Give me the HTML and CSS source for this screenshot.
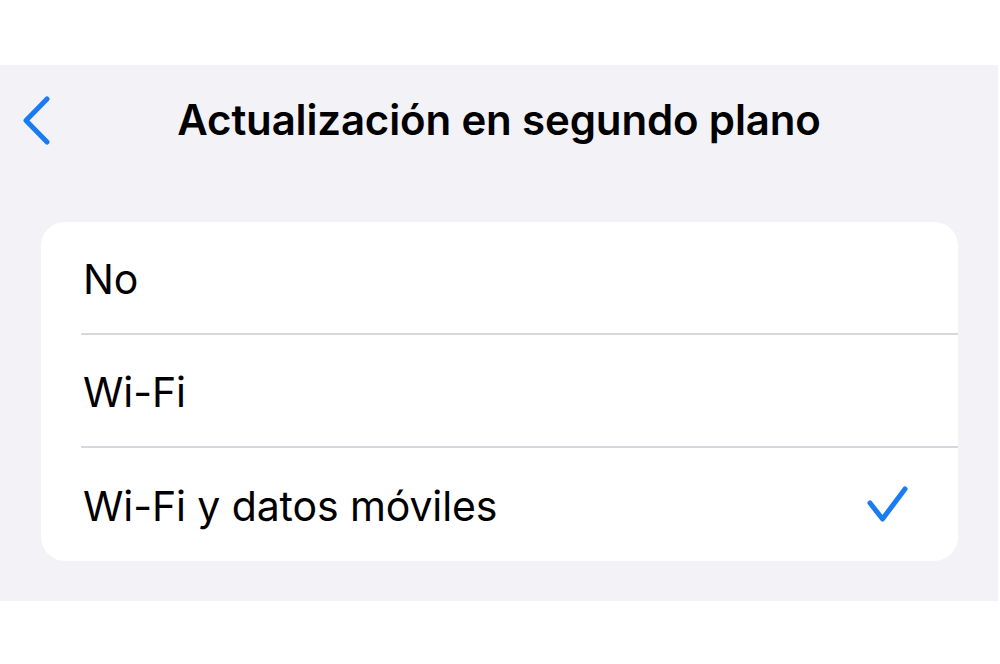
FILE: index.html
```html
<!DOCTYPE html>
<html lang="es">
<head>
<meta charset="utf-8">
<title>Actualización en segundo plano</title>
<link rel="stylesheet" href="styles.css">
</head>
<body>
<div class="screen">
  <header class="nav">
    <div class="nav-left">
      <svg class="back" width="30" height="50" viewBox="0 0 30 50">
        <path d="M25 3 L4 24.5 L25 46" fill="none" stroke="#1a7cf2" stroke-width="5" stroke-linecap="round" stroke-linejoin="round"/>
      </svg>
    </div>
    <h1 class="title">Actualización en segundo plano</h1>
    <div class="nav-right"></div>
  </header>
  <ul class="card">
    <li class="row"><div class="row-inner"><span class="label">No</span></div></li>
    <li class="row"><div class="row-inner"><span class="label">Wi-Fi</span></div></li>
    <li class="row"><div class="row-inner last"><span class="label">Wi-Fi y datos móviles</span>
      <svg class="check" width="48" height="46" viewBox="0 0 48 46">
        <path d="M6 19 L18.5 35 L41 5" fill="none" stroke="#1a7cf2" stroke-width="5" stroke-linecap="round" stroke-linejoin="round"/>
      </svg>
    </div></li>
  </ul>
</div>
</body>
</html>
```
FILE: styles.css
```css
html, body {
  margin: 0;
  padding: 0;
  background: #ffffff;
}
body {
  width: 1000px;
  height: 664px;
  overflow: hidden;
  font-family: Inter, "Liberation Sans", sans-serif;
  color: #000;
}
.screen {
  margin-top: 65px;
  margin-right: 2px;
  height: 536px;
  background: #f2f2f7;
}
.nav {
  height: 110px;
  display: grid;
  grid-template-columns: 1fr auto 1fr;
  align-items: center;
}
.nav-left {
  padding-left: 22px;
  display: flex;
  align-items: center;
}
.back {
  display: block;
  margin-top: 2px;
}
.title {
  margin: 0;
  font-size: 42px;
  font-weight: 600;
  letter-spacing: -0.15px;
  line-height: 1;
}
.card {
  list-style: none;
  margin: 47px 40px 0 41px;
  padding: 0;
  background: #ffffff;
  border-radius: 24px;
}
.row {
  height: 113px;
  padding-left: 40px;
}
.row-inner {
  height: 100%;
  box-sizing: border-box;
  padding-left: 2px;
  padding-right: 46px;
  border-bottom: 2px solid #d8d8dc;
  display: flex;
  align-items: center;
  justify-content: space-between;
}
.row-inner.last {
  border-bottom: none;
}
.label {
  font-size: 41px;
  font-weight: 400;
  letter-spacing: -0.1px;
  line-height: 1;
  padding-top: 4px;
}
.check {
  display: block;
  margin-top: 5px;
}
```
